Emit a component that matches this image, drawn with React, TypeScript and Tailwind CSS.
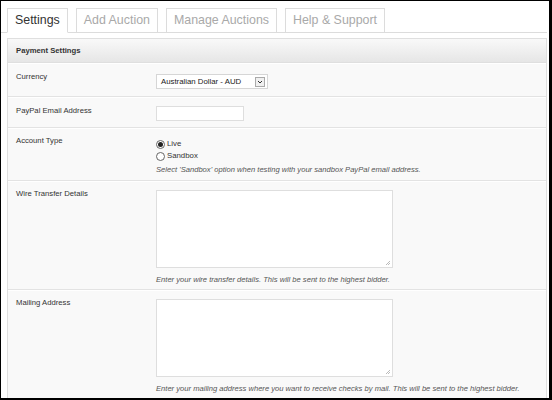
import React from "react";

const font = { fontFamily: '"Liberation Sans", Arial, sans-serif' };

function Tab({ label, active }: { label: string; active?: boolean }) {
  return (
    <div
      className={
        "h-[25px] px-[7px] flex items-center text-[12.4px] border border-[#dcdcdc] -mb-px " +
        (active ? "bg-white text-[#333] border-b-white" : "bg-white text-[#a9a9a9]")
      }
    >
      {label}
    </div>
  );
}

function Radio({ checked, label }: { checked?: boolean; label: string }) {
  return (
    <div className="flex items-center h-[12px] gap-[2px]">
      <span className="w-[9px] h-[9px] rounded-full border border-[#666] bg-white flex items-center justify-center">
        {checked && <span className="w-[5px] h-[5px] rounded-full bg-[#222]" />}
      </span>
      <span className="text-[7.8px] text-[#333]">{label}</span>
    </div>
  );
}

function TextArea() {
  return (
    <div className="relative w-[237px] h-[78px] bg-white border border-[#dedede]">
      <svg className="absolute right-[1px] bottom-[1px]" width="6" height="6" viewBox="0 0 6 6">
        <path d="M5 1 L1 5 M5 3 L3 5" stroke="#aaa" strokeWidth="0.8" />
      </svg>
    </div>
  );
}

function Row({
  label,
  h,
  children,
  last,
  labelClass = "",
}: {
  label: string;
  h: string;
  children: React.ReactNode;
  last?: boolean;
  labelClass?: string;
}) {
  return (
    <div
      className={
        "flex border-t border-t-white " + h + (last ? "" : " border-b border-b-[#e3e3e3]")
      }
    >
      <div className={"w-[148px] pl-[8px] text-[7.7px] text-[#333] shrink-0 " + labelClass}>
        {label}
      </div>
      <div className="flex flex-col">{children}</div>
    </div>
  );
}

export default function App() {
  return (
    <div
      style={font}
      className="w-[552px] h-[400px] overflow-hidden bg-white border-t border-l border-black border-r-[3px] border-b-[2px]"
    >
      {/* tabs */}
      <div className="flex gap-[8px] pl-[6px] pt-[7px] border-b border-[#dcdcdc] mr-[2px]">
        <Tab label="Settings" active />
        <Tab label="Add Auction" />
        <Tab label="Manage Auctions" />
        <Tab label="Help & Support" />
      </div>

      {/* panel */}
      <div className="mt-[5px] ml-[6px] mr-[2px] border border-[#dfdfdf] bg-[#f9f9f9]">
        <div className="h-[24px] flex items-center pl-[8px] text-[7.7px] font-bold text-[#333] bg-gradient-to-b from-[#f9f9f9] to-[#e6e6e6] border-b border-[#dfdfdf]">
          Payment Settings
        </div>

        <Row label="Currency" h="h-[34px] pt-[7px]">
          <div className="mt-[3px] w-[112px] h-[15px] bg-white border border-[#d6d6d6] flex items-center justify-between pl-[4px] pr-[2px]">
            <span className="text-[7.8px] text-[#222]">Australian Dollar - AUD</span>
            <span className="w-[10px] h-[10px] border border-[#aaa] bg-[#f0f0f0] flex items-center justify-center">
              <svg width="6" height="4" viewBox="0 0 6 4">
                <path d="M1 1 L3 3 L5 1" stroke="#333" strokeWidth="1" fill="none" />
              </svg>
            </span>
          </div>
        </Row>

        <Row label="PayPal Email Address" h="h-[31px] pt-[7px]">
          <div className="mt-[1px] w-[88px] h-[15px] bg-white border border-[#dedede]" />
        </Row>

        <Row label="Account Type" h="h-[53px] pt-[6px]">
          <div className="mt-[3px] flex flex-col">
            <Radio checked label="Live" />
            <Radio label="Sandbox" />
            <div className="mt-[2px] text-[7.6px] italic text-[#555]">
              Select 'Sandbox' option when testing with your sandbox PayPal email address.
            </div>
          </div>
        </Row>

        <Row label="Wire Transfer Details" h="h-[109px] pt-[8px]" labelClass="-mt-[2px]">
          <TextArea />
          <div className="mt-[6px] text-[7.6px] italic text-[#555]">
            Enter your wire transfer details. This will be sent to the highest bidder.
          </div>
        </Row>

        <Row label="Mailing Address" h="h-[110px] pt-[8px]" labelClass="-mt-[2px]" last>
          <TextArea />
          <div className="mt-[6px] text-[7.6px] italic text-[#555] whitespace-nowrap">
            Enter your mailing address where you want to receive checks by mail. This will be sent to the highest bidder.
          </div>
        </Row>
      </div>
    </div>
  );
}
